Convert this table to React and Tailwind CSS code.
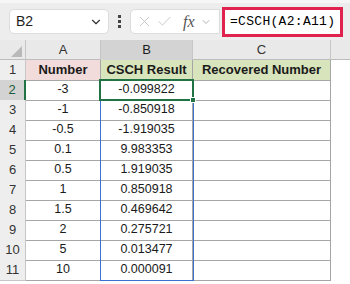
import { ChevronDown, X, Check } from "lucide-react";

const rows = [
  ["-3", "-0.099822"],
  ["-1", "-0.850918"],
  ["-0.5", "-1.919035"],
  ["0.1", "9.983353"],
  ["0.5", "1.919035"],
  ["1", "0.850918"],
  ["1.5", "0.469642"],
  ["2", "0.275721"],
  ["5", "0.013477"],
  ["10", "0.000091"],
];

function App() {
  return (
    <div className="w-[350px] h-[284px] overflow-hidden bg-white font-['Liberation_Sans',sans-serif] text-[#1a1a1a]">
      {/* formula bar */}
      <div className="h-[40px] bg-[#ededed] border-t-[3px] border-[#f6f6f6] flex items-center pl-[9px] pr-[7px]">
        <div className="shrink-0 w-[100px] h-[25px] bg-white border border-[#dcdcdc] rounded-[5px] flex items-center justify-between pl-[6px] pr-[5px]">
          <span className="text-[14px] text-[#1f1f1f]">B2</span>
          <ChevronDown size={14} strokeWidth={2} className="text-[#333]" />
        </div>
        <div className="shrink-0 w-[21px] flex flex-col items-center gap-[2px]">
          <span className="w-[3px] h-[3px] bg-[#444]" />
          <span className="w-[3px] h-[3px] bg-[#444]" />
          <span className="w-[3px] h-[3px] bg-[#444]" />
        </div>
        <div className="shrink-0 w-[90px] h-[25px] bg-white border border-[#dcdcdc] rounded-l-[5px] flex items-center pl-[5px] gap-[3px]">
          <X size={17} strokeWidth={1.3} className="text-[#c4c4c4]" />
          <Check size={17} strokeWidth={1.3} className="text-[#c4c4c4]" />
          <span className="ml-[7px] font-['Liberation_Serif',serif] italic text-[16px] text-[#555]">fx</span>
          <ChevronDown size={12} strokeWidth={1.5} className="text-[#999] ml-[2px]" />
        </div>
        <div className="ml-[2px] flex-1 min-w-0 overflow-hidden h-[30px] bg-white border-[3px] border-[#e0224f] flex items-center pl-[5px]">
          <span className="whitespace-nowrap font-mono text-[13px] tracking-[0.3px] text-black">=CSCH(A2:A11)</span>
        </div>
      </div>

      {/* sheet */}
      <div className="relative">
        <div className="grid grid-cols-[26px_75px_92px_138px_19px] h-[20px] bg-[#e9e9e9] border-b border-[#bdbdbd] text-[13px] text-[#333]">
          <div className="border-r border-[#c6c6c6] relative">
            <span className="absolute right-[3px] bottom-[3px] w-0 h-0 border-l-[11px] border-l-transparent border-b-[11px] border-b-[#b9b9b9]" />
          </div>
          <div className="border-r border-[#c6c6c6] flex items-center justify-center">A</div>
          <div className="border-r border-[#c6c6c6] bg-[#d3d3d3] flex items-center justify-center text-[#1d1d1d]">B</div>
          <div className="border-r border-[#c6c6c6] flex items-center justify-center">C</div>
          <div />
        </div>

        <div className="grid grid-cols-[26px_75px_92px_138px_19px] h-[20px]">
          <div className="bg-[#eeeeee] border-r border-b border-[#c6c6c6] flex items-center justify-center text-[13px] text-[#333]">1</div>
          <div className="bg-[#f2dcdb] border-r border-b border-[#a6a6a6] flex items-center justify-center text-[13px] font-bold">Number</div>
          <div className="bg-[#d8e4bc] border-r border-b border-[#a6a6a6] flex items-center justify-center text-[13px] font-bold">CSCH Result</div>
          <div className="bg-[#d8e4bc] border-r border-b border-[#a6a6a6] flex items-center justify-center text-[13px] font-bold">Recovered Number</div>
          <div />
        </div>

        {rows.map(([a, b], i) => (
          <div key={i} className="grid grid-cols-[26px_75px_92px_138px_19px] h-[20px]">
            <div
              className={
                i === 0
                  ? "bg-[#d3d3d3] border-r-2 border-r-[#217346] border-b border-b-[#c6c6c6] flex items-center justify-center text-[13px] text-[#1e5c3a]"
                  : "bg-[#eeeeee] border-r border-b border-[#c6c6c6] flex items-center justify-center text-[13px] text-[#333]"
              }
            >
              {i + 2}
            </div>
            <div className="border-r border-b border-[#a6a6a6] flex items-center justify-center text-[12.5px]">{a}</div>
            <div className="border-r border-b border-[#a6a6a6] flex items-center justify-center text-[12.5px]">{b}</div>
            <div className="border-r border-b border-[#a6a6a6]" />
            <div />
          </div>
        ))}

        {/* range highlight and active cell */}
        <div className="absolute left-[100px] top-[59px] w-[94px] h-[182px] border border-[#3b6fd0] pointer-events-none" />
        <div className="absolute left-[99px] top-[39px] w-[95px] h-[22px] border-2 border-[#217346] pointer-events-none" />
        <div className="absolute left-[190px] top-[57px] w-[6px] h-[6px] bg-[#217346] border border-white pointer-events-none" />
      </div>
    </div>
  );
}

export default App;
